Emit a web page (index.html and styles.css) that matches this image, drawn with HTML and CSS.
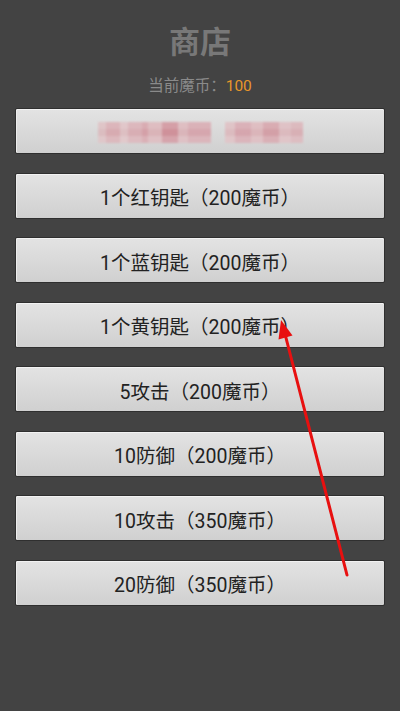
FILE: index.html
```html
<!DOCTYPE html>
<html lang="zh-CN">
<head>
<meta charset="UTF-8" />
<meta name="viewport" content="width=device-width, initial-scale=1.0" />
<title>商店</title>
<link rel="stylesheet" href="styles.css">
</head>
<body>
<div class="shop">
<!-- 标题 -->
<h1>商店</h1>
<p class="coins">当前魔币：<span class="amount">100</span></p>
<!-- 商品按钮 -->
<div class="items">
<button class="item">
<span class="mosaic mosaic-a"></span>
<span class="mosaic mosaic-b"></span>
</button>
<button class="item">1个红钥匙（200魔币）</button>
<button class="item">1个蓝钥匙（200魔币）</button>
<button class="item">1个黄钥匙（200魔币）</button>
<button class="item">5攻击（200魔币）</button>
<button class="item">10防御（200魔币）</button>
<button class="item">10攻击（350魔币）</button>
<button class="item">20防御（350魔币）</button>
</div>
</div>
<!-- 标注箭头 -->
<svg class="arrow" width="400" height="711" viewBox="0 0 400 711">
<line x1="347" y1="575" x2="285" y2="334" stroke="#e81010" stroke-width="3" stroke-linecap="round" />
<polygon points="281,320 292.5,335.5 278.5,339.5" fill="#e81010" />
</svg>
</body>
</html>
```

FILE: styles.css
```css
/* === 基本样式 === */
body {
  margin: 0;
  padding: 0;
  background-color: #434343;
  font-family: Roboto, "Noto Sans CJK SC", sans-serif;
  height: 711px;
  overflow: hidden;
  position: relative;
}
.shop {
  padding: 0 15px;
}
h1 {
  margin: 0;
  padding-top: 23px;
  line-height: 40px;
  font-size: 31px;
  font-weight: bold;
  color: #787878;
  text-align: center;
}
.coins {
  margin: 13px 0 0;
  line-height: 20px;
  font-size: 15.5px;
  color: #8a8a8a;
  text-align: center;
}
.amount {
  color: #e8962a;
}
/* === 商品按钮 === */
.items {
  margin-top: 12px;
  display: flex;
  flex-direction: column;
  gap: 18.5px;
}
.item {
  height: 46px;
  width: 100%;
  border: 1px solid #2f2f2f;
  border-radius: 2px;
  background: linear-gradient(#e3e3e3, #d0d0d0);
  box-shadow: inset 0 1px 0 #f2f2f2, inset 1px 0 0 #ececec;
  font-family: Roboto, "Noto Sans CJK SC", sans-serif;
  font-size: 19.5px;
  color: #222;
  padding: 2px 0 0;
  display: flex;
  align-items: center;
  justify-content: center;
}
/* 打码的文字 */
.mosaic {
  height: 21px;
  opacity: 0.75;
  filter: blur(0.8px);
}
.mosaic-a {
  width: 113px;
  background:
    linear-gradient(#ffffff22 0 7px, transparent 7px 14px, #ffffff33 14px),
    linear-gradient(90deg, #dcb4b8 0 8px, #d79ca4 8px 22px, #dfb7bb 22px 30px, #d8a0a8 30px 44px, #d38e98 44px 50px, #dba8ae 50px 64px, #cc7a86 64px 80px, #dbaab0 80px 90px, #d596a0 90px 113px);
  margin-right: 14px;
}
.mosaic-b {
  width: 78px;
  background:
    linear-gradient(#ffffff22 0 7px, transparent 7px 14px, #ffffff33 14px),
    linear-gradient(90deg, #ddb2b7 0 10px, #d595a0 10px 26px, #dcaab0 26px 38px, #d28d97 38px 54px, #ddb0b6 54px 66px, #d8a3aa 66px 78px);
}
/* === 箭头 === */
.arrow {
  position: absolute;
  top: 0;
  left: 0;
  pointer-events: none;
}
```
